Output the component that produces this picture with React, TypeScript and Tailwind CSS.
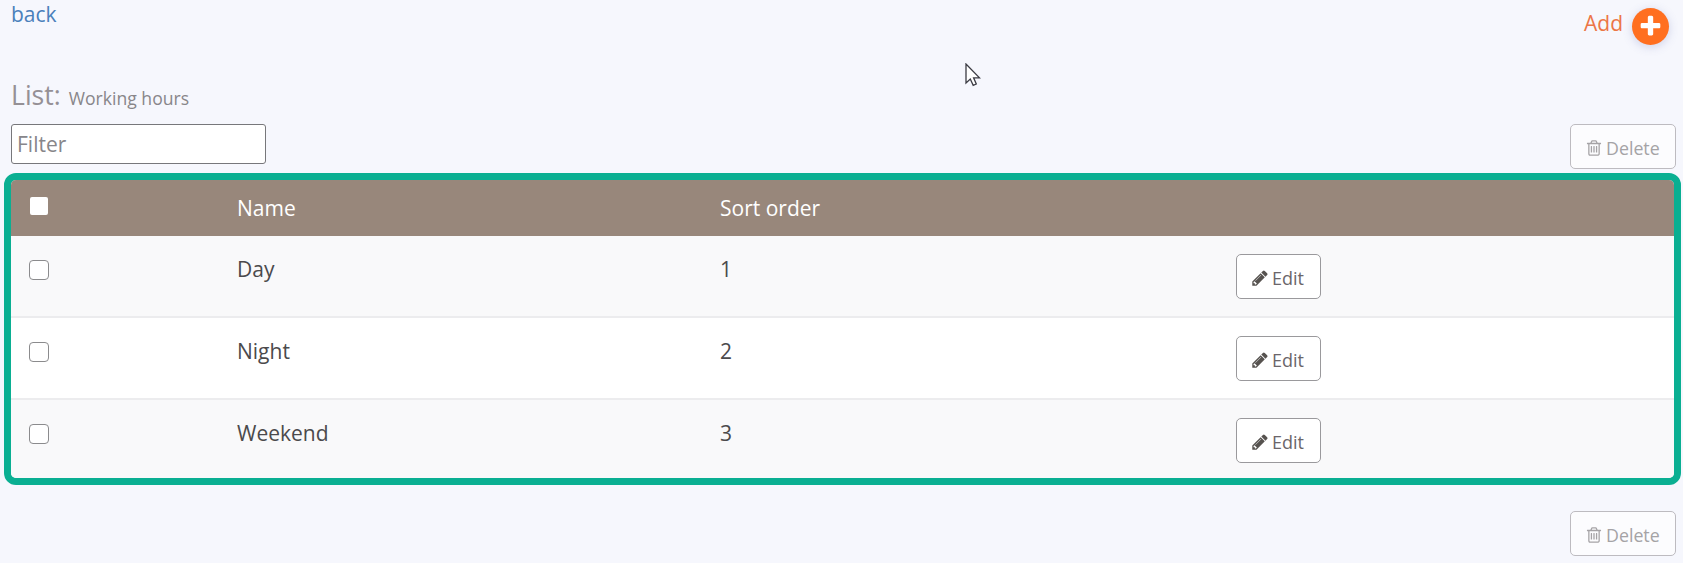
import { ReactNode } from "react";

interface WorkingHour {
    id: number;
    name: string;
    sortOrder: number;
}

const rows: WorkingHour[] = [
    { id: 1, name: "Day", sortOrder: 1 },
    { id: 2, name: "Night", sortOrder: 2 },
    { id: 3, name: "Weekend", sortOrder: 3 },
];

function Icon({ d, className }: { d: string; className: string }) {
    return (
        <svg viewBox="0 0 1792 1792" fill="currentColor" className={className}>
            <path d={d} />
        </svg>
    );
}

const PLUS =
    "M1600 736v192q0 40-28 68t-68 28h-416v416q0 40-28 68t-68 28h-192q-40 0-68-28t-28-68v-416h-416q-40 0-68-28t-28-68v-192q0-40 28-68t68-28h416v-416q0-40 28-68t68-28h192q40 0 68 28t28 68v416h416q40 0 68 28t28 68z";
const PENCIL =
    "M491 1536l91-91-235-235-91 91v107h128v128h107zm523-928q0-22-22-22-10 0-17 7l-542 542q-7 7-7 17 0 22 22 22 10 0 17-7l542-542q7-7 7-17zm-54-192l416 416-832 832h-416v-416zm683 96q0 53-37 90l-166 166-416-416 166-165q36-38 90-38 53 0 91 38l235 234q37 39 37 91z";
const TRASH =
    "M704 736v576q0 14-9 23t-23 9h-64q-14 0-23-9t-9-23v-576q0-14 9-23t23-9h64q14 0 23 9t9 23zm256 0v576q0 14-9 23t-23 9h-64q-14 0-23-9t-9-23v-576q0-14 9-23t23-9h64q14 0 23 9t9 23zm256 0v576q0 14-9 23t-23 9h-64q-14 0-23-9t-9-23v-576q0-14 9-23t23-9h64q14 0 23 9t9 23zm128 724v-948h-896v948q0 22 7 40.5t14.5 27 10.5 8.5h832q3 0 10.5-8.5t14.5-27 7-40.5zm-672-1076h448l-48-117q-7-9-17-11h-317q-10 2-17 11zm928 32v64q0 14-9 23t-23 9h-96v948q0 83-47 143.5t-113 60.5h-832q-66 0-113-58.5t-47-141.5v-952h-96q-14 0-23-9t-9-23v-64q0-14 9-23t23-9h309l70-167q15-37 54-63t79-26h320q40 0 79 26t54 63l70 167h309q14 0 23 9t9 23z";

function DeleteButton() {
    return (
        <button
            disabled
            className="flex h-[45px] w-[106px] items-center gap-[3px] rounded-[5px] border-[1.5px] border-[#bdbbc0] bg-[#fcfcfe] pt-[2px] pl-[14px] text-[17.8px] text-[#a5a3a6]"
        >
            <Icon d={TRASH} className="size-[18px] shrink-0" />
            <span>Delete</span>
        </button>
    );
}

function EditButton() {
    return (
        <button className="flex h-[45px] w-[85px] items-center gap-[3px] rounded-[5px] border-[1.5px] border-[#9a999c] bg-white pt-[2px] pl-[14px] text-[18px] text-[#6b666a]">
            <Icon d={PENCIL} className="size-[18px] shrink-0 text-[#56524f]" />
            <span>Edit</span>
        </button>
    );
}

function Checkbox({ header }: { header?: boolean }) {
    return (
        <input
            type="checkbox"
            className={
                header
                    ? "block size-[18px] appearance-none rounded-[2px] bg-white"
                    : "block size-5 appearance-none rounded-[4px] border-[1.5px] border-[#8b8b8d] bg-white"
            }
        />
    );
}

function Row({ className, children }: { className: string; children: ReactNode }) {
    return <div className={`grid grid-cols-[226px_483px_516px_1fr] ${className}`}>{children}</div>;
}

export default function App() {
    return (
        <div className="relative h-[563px] w-[1683px] overflow-hidden bg-[#f6f7fd] font-['Open_Sans','Noto_Sans',sans-serif] text-[21px] leading-[30px] text-[#4b4a4c]">
            {/* Top links */}
            <div className="flex h-[80px] items-start justify-between pl-[11px] pr-[14px]">
                <a href="#" className="-mt-px text-[#4a80bb]">back</a>
                <a href="#" className="flex gap-[9px] pt-2 text-[#ec7647]">
                    <span>Add</span>
                    <span className="flex size-[37px] items-center justify-center rounded-full bg-[#ff6f20] text-white shadow-[0_2px_10px_rgba(90,100,170,0.25)]">
                        <Icon d={PLUS} className="size-[25px]" />
                    </span>
                </a>
            </div>

            <h1 className="flex h-[44px] items-baseline gap-2 pl-[11px] text-[26.6px] text-[#959095]">
                List: <small className="text-[17.6px] text-[#88868a]">Working hours</small>
            </h1>

            <div className="flex h-[49px] items-start justify-between pl-[11px] pr-[7px]">
                <input
                    placeholder="Filter"
                    className="h-[40px] w-[255px] rounded-[3px] border-[1.5px] border-[#77777b] bg-white px-[5px] placeholder:text-[#87868a]"
                />
                <DeleteButton />
            </div>

            {/* Highlighted table */}
            <div className="ml-1 h-[312px] w-[1677px] overflow-hidden rounded-[12px] border-[7px] border-[#0aaf92] bg-[#f9f9fa]">
                <Row className="h-[56px] bg-[#98877b] pt-[13px] text-white">
                    <div className="pl-[19px] pt-[4px]"><Checkbox header /></div>
                    <div>Name</div>
                    <div>Sort order</div>
                </Row>
                {rows.map((row) => (
                    <Row
                        key={row.id}
                        className="h-[82px] border-b-2 border-[#ececee] pt-[18px] odd:bg-white even:bg-[#f9f9fa]"
                    >
                        <div className="pl-[18px] pt-[6px]"><Checkbox /></div>
                        <div>{row.name}</div>
                        <div>{row.sortOrder}</div>
                        <div><EditButton /></div>
                    </Row>
                ))}
            </div>

            <div className="mt-[26px] flex justify-end pr-[7px]">
                <DeleteButton />
            </div>

            {/* Mouse pointer */}
            <svg viewBox="0 0 16 24" className="absolute left-[965px] top-[63px] h-[24px] w-[16px]">
                <path
                    d="M1 1V20L5.3 16L8.2 22.3L11.3 21L8.6 14.8H14.5Z"
                    fill="#fff"
                    stroke="#3c3c44"
                    strokeWidth="1.3"
                />
            </svg>
        </div>
    );
}
